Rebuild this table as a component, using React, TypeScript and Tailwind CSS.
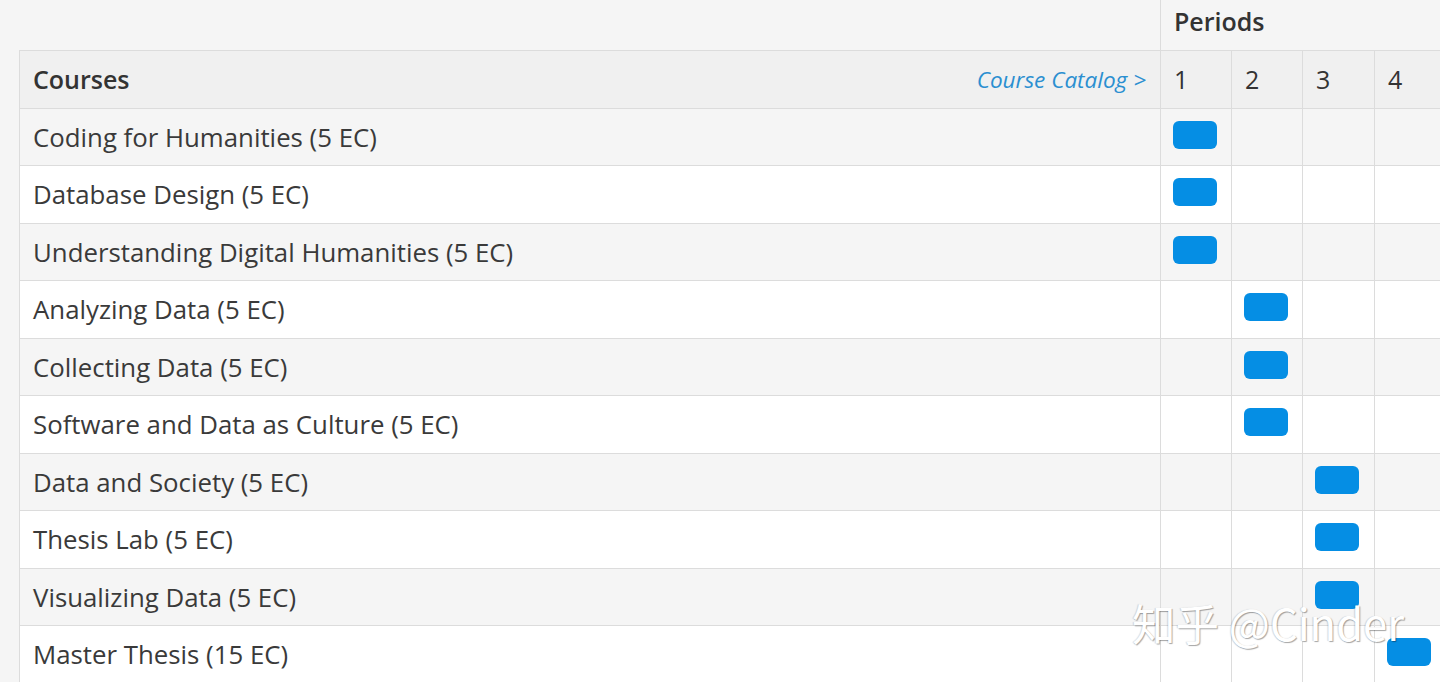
const courses: { name: string; period: number }[] = [
  { name: "Coding for Humanities (5 EC)", period: 1 },
  { name: "Database Design (5 EC)", period: 1 },
  { name: "Understanding Digital Humanities (5 EC)", period: 1 },
  { name: "Analyzing Data (5 EC)", period: 2 },
  { name: "Collecting Data (5 EC)", period: 2 },
  { name: "Software and Data as Culture (5 EC)", period: 2 },
  { name: "Data and Society (5 EC)", period: 3 },
  { name: "Thesis Lab (5 EC)", period: 3 },
  { name: "Visualizing Data (5 EC)", period: 3 },
  { name: "Master Thesis (15 EC)", period: 4 },
];

// column widths measured off the screenshot
const periods = [
  { n: 1, w: "w-[71px]" },
  { n: 2, w: "w-[71px]" },
  { n: 3, w: "w-[72px]" },
  { n: 4, w: "w-[72px]" },
];

export default function App() {
  return (
    <div
      className="relative w-[1440px] h-[682px] overflow-hidden bg-[#f5f5f5] text-[#333]"
      style={{ fontFamily: '"Open Sans", "Noto Sans", sans-serif' }}
    >
      <div className="pl-[19px] w-[1460px]">
        {/* periods header */}
        <div className="flex h-[50px]">
          <div className="w-[1141px]" />
          <div className="flex-1 border-l border-[#dcdcdc] pl-[13px] pt-[3px] text-[25px] font-semibold text-[#333]">
            Periods
          </div>
        </div>

        <div className="border-t border-l border-[#dcdcdc]">
          {/* column header */}
          <div className="flex h-[58px] bg-[#f0f0f0] border-b border-[#dcdcdc]">
            <div className="w-[1140px] flex items-center justify-between pl-[13px] pr-[14px]">
              <span className="text-[25px] font-semibold text-[#333]">Courses</span>
              <a className="text-[22.5px] italic text-[#2b8fd0] cursor-pointer">Course Catalog &gt;</a>
            </div>
            {periods.map((p) => (
              <div
                key={p.n}
                className={`${p.w} border-l border-[#dcdcdc] flex items-center pl-[13px] text-[25px] font-medium text-[#333]`}
              >
                {p.n}
              </div>
            ))}
          </div>

          {courses.map((c, i) => (
            <div
              key={c.name}
              className={
                "flex border-b border-[#dcdcdc] " +
                (i % 2 === 0 ? "bg-[#f5f5f5] h-[57px]" : "bg-white h-[58px]")
              }
            >
              <div className="w-[1140px] flex items-center pl-[13px] text-[25.8px] text-[#3a3a3a]">
                {c.name}
              </div>
              {periods.map((p) => (
                <div key={p.n} className={`${p.w} border-l border-[#dcdcdc] pl-[12px] pt-[12px]`}>
                  {c.period === p.n && (
                    <div className="w-[44px] h-[28px] rounded-[6px] bg-[#058ee4]" />
                  )}
                </div>
              ))}
            </div>
          ))}
        </div>
      </div>

      {/* watermark */}
      <div
        className="absolute left-[1132px] top-[590px] text-[43.5px] text-white pointer-events-none"
        style={{
          fontFamily: '"Noto Sans CJK SC", "Open Sans", sans-serif',
          textShadow: "1px 1px 1px rgba(0,0,0,0.35), -1px 0 1px rgba(0,0,0,0.15)",
        }}
      >
        知乎 @Cinder
      </div>
    </div>
  );
}
